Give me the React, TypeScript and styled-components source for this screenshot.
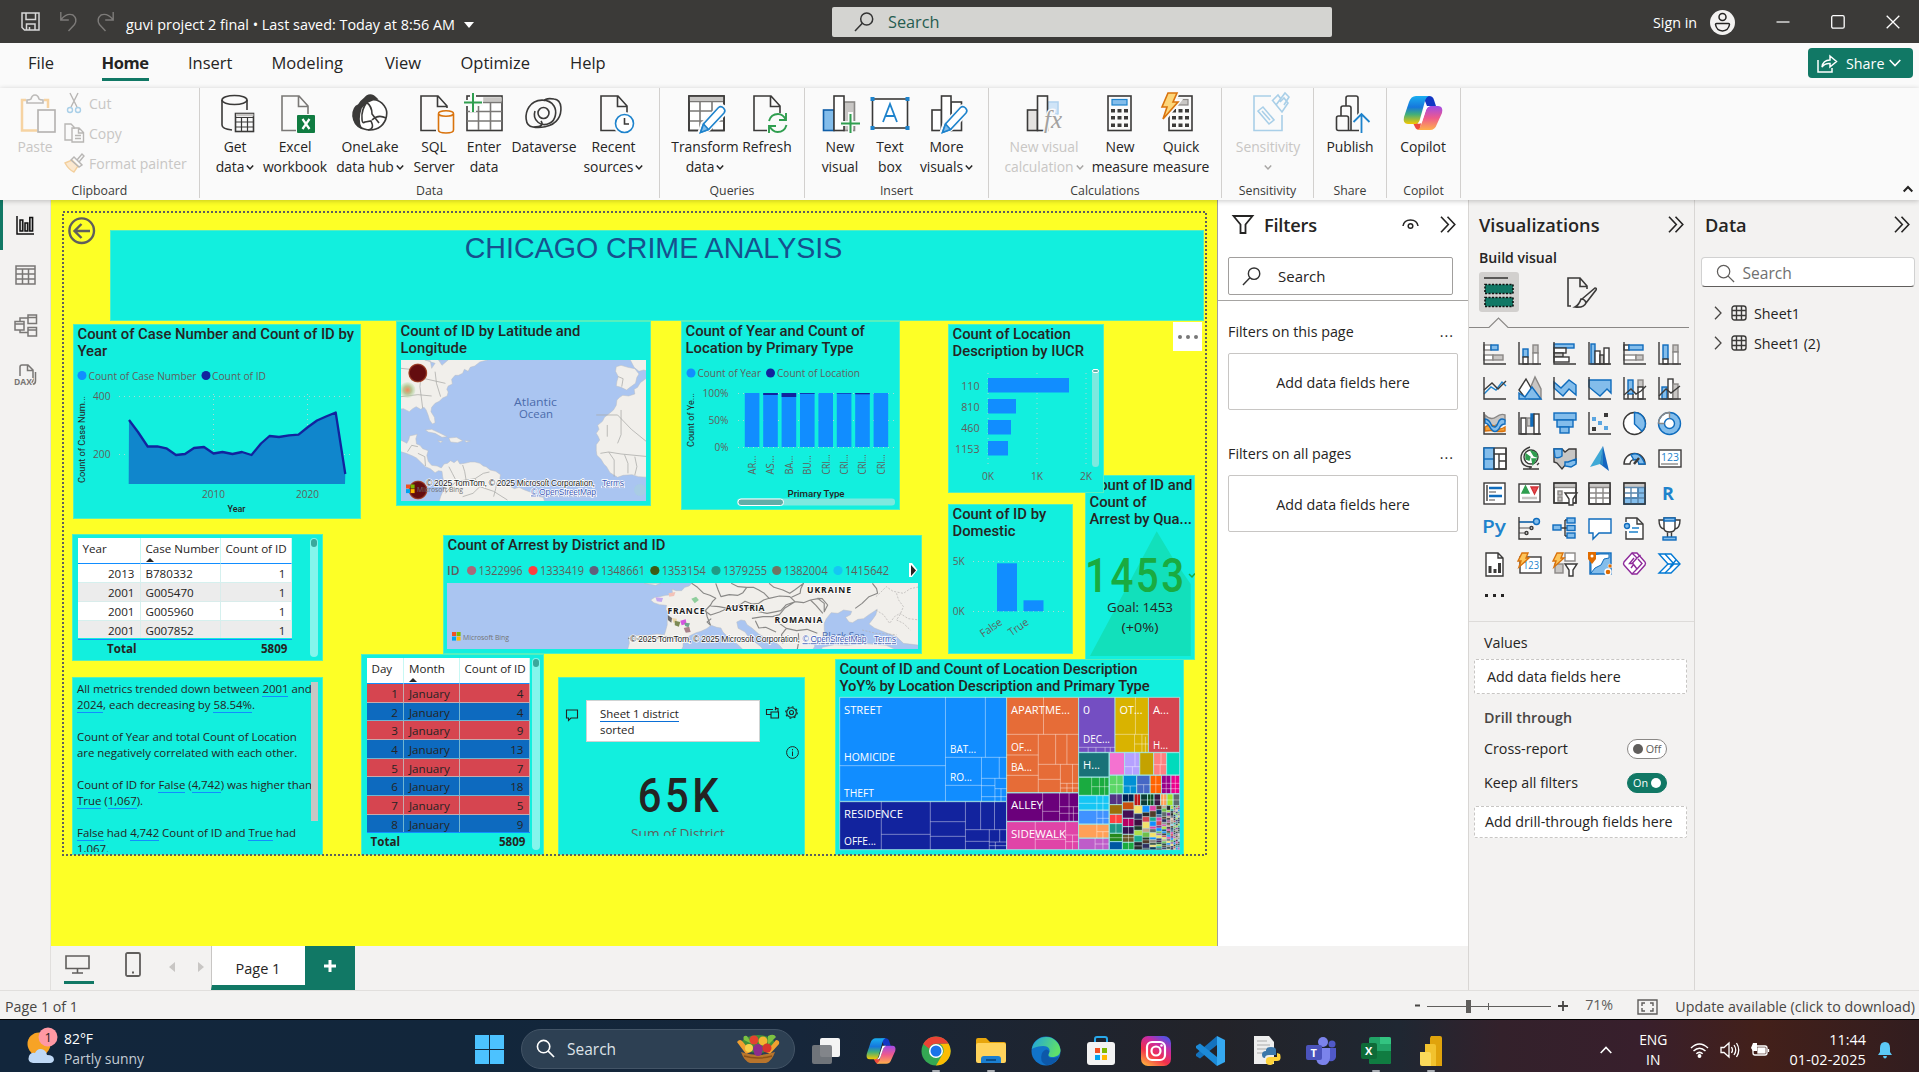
import React from 'react';
import styled, { createGlobalStyle } from 'styled-components';

const UI = "'Open Sans', 'Noto Sans', sans-serif";
const DIN = "Roboto, 'Open Sans', sans-serif";
const TEAL = '#12efde';
const GREEN = '#117865';
const INK = '#252423';
const PANE = '#f3f2f1';
const D = '#3b3a39';
const B = '#0f6cbd';
const F = '#83bdeb';
const G = '#c8c6c4';

const Global = createGlobalStyle`
  * { box-sizing: border-box; }
  body { margin: 0; font-family: ${UI}; color: ${INK}; overflow: hidden; }
  svg { display: block; flex: none; overflow: visible; }
`;

const Shell = styled.div`
  width: 1919px; height: 1072px; display: flex; flex-direction: column;
  background: ${PANE}; overflow: hidden; white-space: nowrap;
`;

/* ---------- title bar ---------- */
const TitleBar = styled.header`
  height: 43px; flex: none; background: #3b3a38; color: #fff; display: flex; align-items: center;
`;
const QuickAccess = styled.div`
  width: 832px; display: flex; align-items: center; padding-left: 21px; gap: 20px;
`;
const DocName = styled.div`
  font-size: 14.4px; letter-spacing: 0; display: flex; align-items: center; gap: 9px; margin: 6px 0 0 -8px;
`;
const TitleSearch = styled.div`
  width: 500px; height: 30px; background: #d4d4d1; border-radius: 2px; display: flex; align-items: center;
  padding-left: 22px; gap: 14px; font-size: 16.3px; color: #265c50;
`;
const WindowSide = styled.div`
  flex: 1; display: flex; align-items: center; padding-left: 321px; font-size: 14.3px; padding-top: 1px;
`;
const WindowButtons = styled.div`
  display: flex; gap: 41px; margin-left: 41px; align-items: center;
`;
const Avatar = styled.div`margin-left: 13px;`;

/* ---------- menu ---------- */
const MenuBar = styled.nav`
  height: 45px; flex: none; background: #fafafa; display: flex; align-items: flex-start; padding-left: 28px; position: relative;
`;
const MenuItem = styled.div<{ $w: number; $on?: boolean }>`
  width: ${p => p.$w}px; font-size: 16.5px; line-height: 24px; padding-top: 8px;
  font-weight: ${p => (p.$on ? 700 : 400)}; letter-spacing: ${p => (p.$on ? '-0.4px' : '0')};
  span { display: inline-block; padding-bottom: 3px; border-bottom: 3px solid ${p => (p.$on ? GREEN : 'transparent')}; }
`;
const ShareButton = styled.div`
  margin-left: auto; margin-right: 6px; margin-top: 5px; width: 105px; height: 30px; border-radius: 4px; background: ${GREEN}; color: #fff;
  display: flex; align-items: center; padding-left: 9px; gap: 9px; font-size: 14.3px;
`;
const Tight = styled.span`display: flex; align-items: center; gap: 5px;`;

/* ---------- ribbon ---------- */
const Ribbon = styled.div`
  height: 112px; flex: none; background: #fafafa; display: flex; position: relative; z-index: 2;
  box-shadow: 0 1px 5px rgba(0,0,0,.22);
`;
const Group = styled.section<{ $w: number }>`
  width: ${p => p.$w}px; height: 110px; border-right: 1px solid #d2d0ce; display: flex; flex-direction: column;
`;
const GroupBody = styled.div<{ $pad: number }>`
  display: flex; height: 92px; flex: none; padding: 5px 0 0 ${p => p.$pad}px;
`;
const GroupName = styled.div`
  font-size: 12.3px; line-height: 18px; text-align: center; margin-top: 2px; color: #3b3a39;
`;
const Tool = styled.div<{ $w: number; $dim?: boolean }>`
  width: ${p => p.$w}px; display: flex; flex-direction: column; align-items: center; font-size: 13.9px; line-height: 20px;
  color: ${p => (p.$dim ? '#c8c6c4' : INK)}; letter-spacing: -0.05px;
`;
const ToolLine = styled.div<{ $first?: boolean }>`
  margin-top: ${p => (p.$first ? 4 : 0)}px; display: flex; align-items: center; gap: 2px; min-height: 20px;
`;
const ClipRows = styled.div`display: flex; flex-direction: column; width: 130px; padding-left: 9px; margin-top: -5px;`;
const ClipRow = styled.div`
  height: 30px; flex: none; display: flex; align-items: center; gap: 5px; font-size: 14px; color: #c8c6c4;
`;
const Collapse = styled.div`margin: 97px 6px 0 auto;`;

/* ---------- main ---------- */
const Main = styled.div`height: 790px; flex: none; display: flex;`;
const Rail = styled.aside`
  width: 51px; border-right: 1px solid #e1dfdd; background: ${PANE}; display: flex; flex-direction: column;
`;
const RailItem = styled.div<{ $on?: boolean }>`
  height: 50px; display: flex; align-items: center; justify-content: center;
  border-left: 3px solid ${p => (p.$on ? GREEN : 'transparent')}; padding-right: 3px;
`;
const Center = styled.div`width: 1417px; display: flex; flex-direction: column;`;
const CenterRow = styled.div`height: 746px; display: flex;`;
const Canvas = styled.main`
  width: 1167px; height: 746px; background: #fdff26; position: relative; overflow: hidden; border-right: 1px solid #a19f9d;
`;
const PageFrame = styled.div`
  position: absolute; left: 11px; top: 11px; width: 1145px; height: 645px; overflow: hidden;
`;
const Visual = styled.section<{ $x: number; $y: number; $w: number; $h: number }>`
  position: absolute; left: ${p => p.$x - 51}px; top: ${p => p.$y - 200}px; width: ${p => p.$w}px; height: ${p => p.$h}px;
  background: ${TEAL}; box-shadow: inset 0 0 0 1px rgba(170,240,150,.45); overflow: hidden;
`;
const Over = styled.div<{ $x: number; $y: number }>`
  position: absolute; left: ${p => p.$x - 51}px; top: ${p => p.$y - 200}px;
`;
const VTitle = styled.h3<{ $ls?: number }>`
  margin: 0; padding: 2px 0 0 4.5px; font: 500 14.8px/17px ${DIN}; letter-spacing: ${p => p.$ls ?? 0.02}px; color: ${INK};
`;
const PageTitle = styled.h1`
  margin: 0; text-align: center; font: 400 28.6px/34px 'Liberation Sans', Arial, sans-serif; color: #17508d; padding: 1px 7px 0 0;
`;
const MoreBox = styled.div`
  width: 29px; height: 29px; background: #fff; display: flex; align-items: center; justify-content: center; gap: 4px;
  i { width: 4px; height: 4px; border-radius: 50%; background: #777; }
`;
const MapPad = styled.div`padding: 3px 0 0 5px;`;

/* tables */
const GridTable = styled.div<{ $cols: string }>`
  display: grid; grid-template-columns: ${p => p.$cols}; margin: 4px 0 0 5.5px; width: max-content; font-size: 11.6px;
`;
const Head = styled.div<{ $r?: boolean }>`
  background: #fff; height: 26px; border-bottom: 1px solid #118dff; border-right: 1px solid #c8f8f4; padding: 2px 5px 0; line-height: 17px;
  text-align: ${p => (p.$r ? 'right' : 'left')};
  svg { margin-top: 1px; }
`;
const Cell = styled.div<{ $bg: string; $r?: boolean; $short?: boolean; $line: string }>`
  background: ${p => p.$bg}; height: ${p => (p.$short ? 17.2 : 18.7)}px; line-height: 19.5px; padding: 0 5px; overflow: hidden;
  text-align: ${p => (p.$r ? 'right' : 'left')};
  border-bottom: ${p => (p.$short ? 0 : 1)}px solid ${p => p.$line}; border-right: 1px solid ${p => p.$line};
`;
const Foot = styled.div<{ $r?: boolean }>`
  border-top: 1px solid #118dff; font-weight: 700; height: 18px; line-height: 17px; padding: 0 4px; text-align: ${p => (p.$r ? 'right' : 'left')};
`;
const Row = styled.div`display: flex;`;
const ScrollTrack = styled.div<{ $h: number; $ml: number }>`
  width: 8px; height: ${p => p.$h}px; margin: 4px 0 0 ${p => p.$ml}px; border-radius: 4px; background: #84f5ec; padding: 1px;
  i { display: block; width: 6px; height: 8px; border-radius: 3px; background: #3aa79c; }
`;
const Story = styled.div`
  padding: 4px 0 0 5px; width: 239px; font-size: 11.45px; line-height: 16px; color: ${INK}; height: 175px; overflow: hidden; letter-spacing: -0.02px;
  p { margin: 0 0 16px; }
  u { text-decoration: none; box-shadow: 0 1px 0 #118dff; }
`;
const StoryBar = styled.div`width: 7px; height: 139px; margin-top: 5px; background: #c8c6c4;`;
const QnaRow = styled.div`display: flex; align-items: flex-start; padding: 23px 0 0 8px; gap: 8px;`;
const QnaComment = styled.div`padding-top: 9px;`;
const QnaBox = styled.div`
  width: 174px; height: 42px; background: #fff; border: 1px solid #cfd3d3; padding: 5px 0 0 13px; font-size: 11.4px; line-height: 16px;
  u { text-decoration: none; border-bottom: 1.5px solid #0b6fd6; }
`;
const BigNumber = styled.div`
  font: 500 48px/50px ${DIN}; letter-spacing: 4px; text-align: center; margin: 12px 0 0 -3px; color: ${INK}; transform: scaleX(.87);
`;
const SumLabel = styled.div`
  font-size: 13.7px; line-height: 20px; height: 12px; overflow: hidden; text-align: center; color: #605e5c; margin: 3px 0 0 -7px;
`;
const InfoRow = styled.div`display: flex; justify-content: flex-end; padding: 4px 6px 0 0;`;
const QnaIcons = styled.div`display: flex; gap: 6px; padding-top: 6px; margin-left: -2px;`;

/* page tabs */
const TabsRow = styled.div`height: 44px; display: flex; align-items: flex-start; padding-left: 13px; background: ${PANE};`;
const ViewIcon = styled.div<{ $on?: boolean; $w: number }>`
  width: ${p => p.$w}px; height: 38px; padding: 6px ${p => (p.$on ? 3 : 0)}px 0 0; display: flex; justify-content: center; margin-right: 24px;
  border-bottom: 3px solid ${p => (p.$on ? GREEN : 'transparent')};
`;
const PagerArrows = styled.div`padding-top: 16px; margin-left: -3px;`;
const PageTab = styled.div`
  width: 94px; height: 44px; background: #fff; border-left: 1px solid #c8c6c4; border-bottom: 5px solid ${GREEN};
  text-align: center; font-size: 14.5px; line-height: 45px; margin-left: 6.5px;
`;
const AddTab = styled.div`width: 50px; height: 44px; background: ${GREEN}; display: flex; justify-content: center; padding-top: 14px;`;

/* panes */
const FiltersPane = styled.aside`width: 250px; background: #fff; height: 746px; padding-top: 10px;`;
const Pane = styled.aside<{ $w: number }>`
  width: ${p => p.$w}px; border-left: 1px solid #d8d6d4; background: ${PANE}; padding-top: 10px; height: 790px;
`;
const PaneHead = styled.div<{ $l: number; $r: number }>`
  display: flex; align-items: center; height: 28px; padding: 0 ${p => p.$r}px 0 ${p => p.$l}px; font-size: 18.2px; font-weight: 600; letter-spacing: 0;
  > :nth-child(2) { margin-left: auto; }
`;
const HeadText = styled.span`padding-top: 2px;`;
const HeadLabel = styled.div`display: flex; align-items: center; gap: 10px; letter-spacing: -0.2px;`;
const HeadIcons = styled.div`display: flex; align-items: center; gap: 21px;`;
const FilterSearch = styled.div`
  margin: 19px 0 5px 10px; width: 225px; height: 38px; border: 1px solid #a19f9d; border-radius: 2px; display: flex; align-items: center;
  padding-left: 13px; gap: 17px; font-size: 15px;
`;
const Rule = styled.div`height: 1px; background: #a6a4a2;`;
const FilterLabel = styled.div<{ $top: number }>`
  margin-top: ${p => p.$top}px; padding: 0 14px 0 10px; display: flex; justify-content: space-between; font-size: 14.3px; line-height: 20px;
  span:last-child { transform: translateX(0); letter-spacing: 1px; }
`;
const DropBox = styled.div`
  margin: 11px 0 0 10px; width: 230px; height: 57px; border: 1px solid #c8c6c4; border-radius: 2px;
  display: flex; align-items: center; justify-content: center; font-size: 14.3px; background: #fff; padding-top: 2px;
`;
const BuildLabel = styled.div`font-size: 14.1px; font-weight: 600; padding-left: 10px; margin-top: 10px; line-height: 20px; letter-spacing: 0;`;
const BuildTabs = styled.div`display: flex; align-items: center; padding-left: 10px; margin-top: 4px; gap: 48px;`;
const BuildTab = styled.div`width: 40px; height: 40px; border-radius: 3px; background: #d2d0ce; display: flex; align-items: center; justify-content: center;`;
const IconGrid = styled.div`display: grid; grid-template-columns: repeat(6, 35px); grid-auto-rows: 35px; padding: 14px 0 0 14px;`;
const MoreDots = styled.div`display: flex; gap: 5.5px; padding: 7px 0 24px 16px; i { width: 2.5px; height: 2.5px; background: ${INK}; }`;
const PaneRule = styled.div`height: 1px; background: #dddbd9;`;
const WellLabel = styled.div<{ $top: number; $semi?: boolean }>`
  font-size: 14.3px; line-height: 20px; padding: 0 27px 0 15px; margin-top: ${p => p.$top}px; display: flex; align-items: center; justify-content: space-between;
  font-weight: ${p => (p.$semi ? 600 : 400)}; color: ${p => (p.$semi ? '#484644' : INK)};
`;
const Well = styled.div<{ $h: number; $top: number; $pl: number }>`
  margin: ${p => p.$top}px 0 0 5px; width: 213px; height: ${p => p.$h}px; background: #fff; border: 1px dashed #c8c6c4; border-radius: 2px;
  padding-left: ${p => p.$pl}px; display: flex; align-items: center; font-size: 14.3px;
`;
const Toggle = styled.span<{ $on?: boolean }>`
  width: 40px; height: 20px; border-radius: 10px; border: 1px solid ${p => (p.$on ? GREEN : '#8a8886')}; background: ${p => (p.$on ? GREEN : '#fff')};
  color: ${p => (p.$on ? '#fff' : '#605e5c')}; font-size: 10.8px; display: flex; align-items: center; justify-content: center; gap: 3px;
  flex-direction: ${p => (p.$on ? 'row-reverse' : 'row')};
  i { width: 10px; height: 10px; border-radius: 50%; background: ${p => (p.$on ? '#fff' : '#605e5c')}; }
`;
const DataSearch = styled.div`
  margin: 19px 0 11px 5.5px; width: 214px; height: 30px; border: 1px solid #d1d1d1; border-bottom-color: #605e5c; border-radius: 4px; background: #fff;
  display: flex; align-items: center; padding: 2px 0 0 14px; gap: 8px; font-size: 15.6px; color: #707070;
`;
const TreeRow = styled.div`height: 30px; display: flex; align-items: center; padding-left: 19px; gap: 9px; font-size: 14.3px; span { margin-left: -2px; }`;

/* status + taskbar */
const StatusBar = styled.footer`
  height: 29px; flex: none; border-top: 1px solid #e1dfdd; background: ${PANE}; display: flex; align-items: center; padding: 3px 4px 0 5px; font-size: 14.25px; color: #484644;
`;
const StatusRight = styled.div`margin-left: auto; display: flex; align-items: center;`;
const Pct = styled.span`width: 52px; margin-left: 16px; color: #605e5c; margin-top: -4px; letter-spacing: -0.2px;`;
const Update = styled.span`margin-left: 17px; letter-spacing: 0.04px;`;
const TaskBar = styled.div`
  height: 53px; flex: none; border-top: 1px solid #000; color: #fff; display: flex; align-items: center; position: relative;
  background: linear-gradient(90deg, #12263c 0, #12263b 480px, #16263a 800px, #232329 1220px, #1f2732 1400px, #33212b 1500px, #381f2c 1640px, #43201a 1760px, #321d1f 1919px);
`;
const Weather = styled.div`display: flex; align-items: center; width: 475px; padding-left: 27px; gap: 7px; font-size: 13.9px; line-height: 20px; span { color: #c4ccd4; }`;
const WeatherText = styled.div`padding-top: 6px;`;
const StartButton = styled.div`padding-top: 6px;`;
const TaskSearch = styled.div`
  width: 274px; height: 40px; border-radius: 20px; background: #2d4053; border: 1px solid #435466; margin: 5px 0 0 17px;
  display: flex; align-items: center; padding: 0 12px 0 14px; gap: 12px; font-size: 15.5px; color: #dde3e8;
  svg:last-child { margin-left: auto; }
`;
const TaskApps = styled.div`display: flex; gap: 25px; margin-left: 15.5px;`;
const TaskApp = styled.div<{ $run?: boolean }>`
  height: 52px; width: 30px; display: flex; flex-direction: column; justify-content: space-between; align-items: center; padding-top: 16px;
  &::after { content: ''; width: 8px; height: 2px; border-radius: 1px; background: ${p => (p.$run ? '#a9adb3' : 'transparent')}; }
`;
const Tray = styled.div`margin-left: auto; padding-right: 26px; display: flex; align-items: center; font-size: 13.9px; line-height: 20px; text-align: center; padding-top: 7px;`;
const TrayIcons = styled.div`display: flex; gap: 11px; margin: 0 19px 0 23px; align-items: center;`;
const Clock = styled.div`text-align: right; margin-right: 11px; font-size: 14.4px; span { letter-spacing: 0.15px; }`;
const Lang = styled.div`margin-left: 27px;`;

/* ---------- icon helpers ---------- */
type P = { children: React.ReactNode; w?: number; h?: number; vb?: string; s?: string; sw?: number; f?: string };
const Svg = ({ children, w = 40, h = 40, vb, s = D, sw = 1.6, f = 'none' }: P) => (
  <svg width={w} height={h} viewBox={vb ?? `0 0 ${w} ${h}`} fill={f} stroke={s} strokeWidth={sw}>{children}</svg>
);
const R = ({ x, y, w, h, f = 'none', s = D }: { x: number; y: number; w: number; h: number; f?: string; s?: string }) => (
  <rect x={x} y={y} width={w} height={h} fill={f} stroke={s} />
);
const Doc = () => <path d="M7 3h17l9 10v24.500H7zM23.500 3v10.500H33" fill="#fafafa" />;
const Lens = ({ w = 20, c = '#333' }: { w?: number; c?: string }) => (
  <Svg w={w} h={w} vb="0 0 20 20" s={c} sw={1.500}><circle cx="12.700" cy="7" r="6" /><path d="M8.300 11.300 1 19" /></Svg>
);
const LensR = ({ w = 19, c = '#605e5c', sw = 1.3 }: { w?: number; c?: string; sw?: number }) => (
  <Svg w={w} h={w} vb="0 0 20 20" s={c} sw={sw}><circle cx="8" cy="8" r="6.500" /><path d="M12.800 12.800 19 19" /></Svg>
);
const Chevrons = () => <Svg w={16} h={17} s="#252423" sw={1.6}><path d="M1 .7 8.300 8.500 1 16.300M7.500 .7l7.300 7.800-7.300 7.800" /></Svg>;
const Drop = ({ dim }: { dim?: boolean }) => <Svg w={8} h={6} s={dim ? '#a8a6a4' : INK} sw={1.500}><path d="M.8 1.500 4 4.900 7.200 1.500" /></Svg>;
const Pencil = () => (
  <g><path d="M14 41 17.500 31 33.500 14.500q3-3 6 0t0 6L23.500 36.500z" fill="#fafafa" stroke="#fafafa" strokeWidth="4" />
    <path d="M15.500 39.500 18.500 31 33.500 14.500q2.500-2 5 .5t.5 5L23.500 36.500z" fill="#fff" stroke="#1e83cc" /><path d="M15.500 39.500 18.500 31l5 5.500z" fill={F} stroke="#1e83cc" /></g>
);
const Calc = ({ grey }: { grey?: boolean }) => (
  <g><rect x="8" y="3" width="23" height="34.500" fill="#fafafa" /><rect x="12" y="6.500" width="15" height="5.500" fill={grey ? G : F} stroke={grey ? '#8a8886' : '#1e83cc'} strokeWidth="1.200" />
    {[16, 23, 30.5].map(y => [11, 17.5, 24].map(x => <rect key={`${x}-${y}`} x={x} y={y} width="4" height="3.500" fill={D} stroke="none" />))}</g>
);
const CopilotMark = ({ w }: { w: number }) => (
  <svg width={w} height={w} viewBox="0 0 40 40">
    <defs>
      <linearGradient id="cpA" x1="0" y1="0" x2="0" y2="1"><stop offset="0" stopColor="#1aaef0" /><stop offset=".4" stopColor="#1577dc" /><stop offset=".65" stopColor="#3fae7c" /><stop offset="1" stopColor="#f5c800" /></linearGradient>
      <linearGradient id="cpB" x1="0" y1="0" x2="0" y2="1"><stop offset="0" stopColor="#a04be8" /><stop offset=".5" stopColor="#ee5a8c" /><stop offset="1" stopColor="#ffb04a" /></linearGradient>
    </defs>
    <path d="M20 3h6q4 0 5 4l2 6h-9z" fill="#1137c4" />
    <path d="M10 30h8l-1 7q-4 0-5-3z" fill="#ee4b3c" />
    <path d="M13 3h13q-3 1-4 5l-5 18q-1 5-5 5H5Q-.5 31 1 24L6 9q2-6 7-6z" fill="url(#cpA)" />
    <path d="M27 37H14q3-1 4-5l5-15q1-4 5-4h7q5.500 0 4 7l-5 11q-2 6-7 6z" fill="url(#cpB)" />
    <path d="M22 13h5q-3 1-4 4l-4 12q-1 2-4 2h-1q3-1 4-6z" fill="#fff" />
  </svg>
);

const tools: Record<string, React.ReactNode> = {
  get: <Svg><ellipse cx="19.500" cy="7" rx="12.500" ry="4.500" /><path d="M7 7v25q0 4 10 5M32 7v10" /><R x={20.5} y={20.5} w={18} h={18} f="#fafafa" /><path d="M21 22h17.500" stroke={G} strokeWidth="2.500" /><path d="M20.500 24.500h18M20.500 29h18M20.500 34h18M26.500 24.500v14M32.500 24.500v14" strokeWidth="1.200" /></Svg>,
  excel: <Svg s="#7a7876"><Doc /><rect x="21" y="21" width="19" height="19" fill="#fafafa" stroke="none" /><rect x="22" y="22" width="18" height="18" rx="1" fill="#107c41" stroke="none" /><path d="m27.500 26 7 10m0-10-7 10" stroke="#fff" strokeWidth="2.200" /></Svg>,
  lake: <Svg><path d="M24 6.500C33 8 38 16 36.500 23 35 32 28 37 20 37 12 37 5 32 3.500 23" fill="#fff" /><path d="M27 6Q20-2 14 6 10 9 8.500 12 3 14 3 23q1 9 8 12Q7 27 11 15q6-8 16-9z" fill={D} /><path d="M17 9Q11 17 12 26q0 5 3 3l6-1q4 8-3 9M16 9q6 4 6 12l7 9M22 27q6-6 14-2" /></Svg>,
  sql: <Svg><Doc /><rect x="22" y="15" width="20" height="26" fill="#fafafa" stroke="none" /><g stroke="#d9730d"><path d="M24.500 21v16q0 3 7.500 3t7.500-3V21" fill="#fafafa" /><ellipse cx="32" cy="20.500" rx="7.500" ry="2.800" fill="#fafafa" /></g></Svg>,
  enter: <Svg><R x={3} y={3} w={35} h={34.5} f="#fff" /><path d="M20 5h17v3H20z" fill={G} stroke={G} /><path d="M3 9.500h35M3 18.500h35M3 28h35M14.500 9v28M26.500 9v28" stroke="#7a7876" /><path d="M9 -1v20M-1 10h20" stroke="#fafafa" strokeWidth="6" /><path d="M9 0v19M0 9.500h18" stroke="#2f9e4f" strokeWidth="2" /></Svg>,
  verse: <Svg><circle cx="19.500" cy="20" r="5.500" /><path d="M9 34C0 33 1 20 5 14c6-9 20-9 25-1 3 5 2 14-4 17-9 5-18-3-15-12" /><path d="M30 6c9 1 8 14 4 20-6 9-20 9-25 8 10 0 10-3 8-6M30 6c-6-1-9 0-10 2" /></Svg>,
  recent: <Svg><Doc /><circle cx="30.500" cy="30.500" r="9.500" fill="#fff" stroke="#fafafa" strokeWidth="4" /><circle cx="30.500" cy="30.500" r="9" fill="#fff" stroke="#1e83cc" /><path d="M30.500 25v6H35" /></Svg>,
  transform: <Svg><R x={4} y={3} w={35} h={34.5} f="#fff" /><path d="M4 5.500h35" stroke={G} strokeWidth="4" /><path d="M4 8.500h35M4 18h35M4 28h35M15 9v28M27 9v28" stroke="#7a7876" /><path d="M4 3h35v34.500H4z" /><Pencil /></Svg>,
  refresh: <Svg><Doc /><rect x="20" y="20" width="22" height="21" fill="#fafafa" stroke="none" /><g stroke="#2f9e4f" strokeWidth="1.900"><path d="M22 28q2-7 9-7 5 0 8 6M39 20v7h-7M39.500 32q-2 7-9 7-5 0-8-6M22 40v-7h7" /></g></Svg>,
  newvis: <Svg><R x={24} y={9} w={10.5} h={28.5} f={G} s="#8a8886" /><R x={3.5} y={17} w={10.5} h={20.5} f={F} s="#0f5ea8" /><R x={14} y={3} w={10} h={34.5} f="#fff" /><path d="M30.500 19v22M20 30.500h21" stroke="#fafafa" strokeWidth="5" /><path d="M30.500 21v19M21 30.500h19" stroke="#2f9e4f" strokeWidth="2" /></Svg>,
  textbox: <Svg><R x={2.5} y={6} w={35} h={29} f="#fff" />{[0.5, 35.5].map(x => [4, 33].map(y => <rect key={`${x}-${y}`} x={x} y={y} width="4" height="4" fill="#1e83cc" stroke="none" />))}<path d="m13 29 7-18 7 18M15.500 23h9" stroke="#1e83cc" strokeWidth="1.800" /></Svg>,
  morevis: <Svg><R x={24} y={9} w={10.5} h={28.5} f="#fff" /><R x={5} y={17} w={9.5} h={20.5} f="#fff" /><R x={14.5} y={3} w={9.5} h={34.5} f="#fff" /><Pencil /></Svg>,
  viscalc: <Svg s="#bdbbb9"><R x={3.5} y={17} w={10} h={20.5} f="#e5e3e1" /><R x={24} y={9} w={10} h={12} f="#cfe4f7" s="#b3d4ef" /><R x={13.5} y={3} w={10} h={34.5} f="#fafafa" /><text x="20" y="35" fontSize="25" fontStyle="italic" fontFamily="'Liberation Serif', serif" fill="#a3a19f" stroke="#fafafa" strokeWidth="3" paintOrder="stroke">fx</text></Svg>,
  measure: <Svg><Calc /></Svg>,
  quick: <Svg><Calc grey /><path d="M7-1h10l-4 9h5L2 28l4-13H0z" fill="#fafafa" stroke="#fafafa" strokeWidth="4" /><path d="M7 0h9l-4 9h5L2 26l4-12H1z" fill="#fdd67a" stroke="#d9730d" /></Svg>,
  sens: <Svg s="#a9cfe8"><path d="M23 3H6v34.500h28V22" /><path d="m10 18 5-4 11 13-5 4zM14 18l8 9M24 8l6-6 3 4M25 8l9 11 6-9-4-5-4 4M28 12l9-12 4 4-5 8" /></Svg>,
  publish: <Svg><path d="M16 13V5q0-2 2-2h8q2 0 2 2v17M11 23v-8q0-2 2-2h6q2 0 2 2v22.500" /><path d="M6.500 25q0-2 2-2h8q2 0 2 2v12.500H8.500q-2 0-2-2zM18 37.500h12" /><path d="M31.500 40V21.500M23.500 29l8-8 8 8" stroke="#fafafa" strokeWidth="5" /><path d="M31.500 40V21.500M23.500 29l8-8 8 8" stroke="#1e83cc" strokeWidth="1.800" /></Svg>,
  copilot: <CopilotMark w={40} />,
};

type ToolDef = [string, number, string, string, boolean?, boolean?];
const groups: { name: string; w: number; pad: number; tools: ToolDef[] }[] = [
  { name: 'Data', w: 460, pad: 11, tools: [['get', 48, 'Get', 'data', true], ['excel', 72, 'Excel', 'workbook'], ['lake', 78, 'OneLake', 'data hub', true], ['sql', 50, 'SQL', 'Server'], ['enter', 50, 'Enter', 'data'], ['verse', 70, 'Dataverse', ''], ['recent', 69, 'Recent', 'sources', true]] },
  { name: 'Queries', w: 145, pad: 11, tools: [['transform', 68, 'Transform', 'data', true], ['refresh', 56, 'Refresh', '']] },
  { name: 'Insert', w: 184, pad: 12, tools: [['newvis', 46, 'New', 'visual'], ['textbox', 54, 'Text', 'box'], ['morevis', 59, 'More', 'visuals', true]] },
  { name: 'Calculations', w: 233, pad: 11, tools: [['viscalc', 88, 'New visual', 'calculation', true, true], ['measure', 64, 'New', 'measure'], ['quick', 58, 'Quick', 'measure']] },
  { name: 'Sensitivity', w: 92, pad: 6, tools: [['sens', 80, 'Sensitivity', '', true, true]] },
  { name: 'Share', w: 73, pad: 6, tools: [['publish', 60, 'Publish', '']] },
  { name: 'Copilot', w: 74, pad: 5, tools: [['copilot', 62, 'Copilot', '']] },
];

/* ---------- visualization gallery ---------- */
const Ax = () => <path d="M1 0v22h22" stroke={D} />;
const W = '#fff';
const GS = '#8a8886';
const gallery: React.ReactNode[] = [
  <><R x={1} y={3} w={7} h={5} f={W} s={GS} /><R x={8} y={3} w={7} h={5} f={F} s={B} /><R x={1} y={13} w={9} h={5} f={W} s={GS} /><R x={10} y={13} w={10} h={5} f={G} s={GS} /><Ax /></>,
  <><R x={5} y={7} w={5} h={8} f={F} s={B} /><R x={5} y={15} w={5} h={7} f={W} /><R x={15} y={3} w={5} h={8} f={G} s={GS} /><R x={15} y={11} w={5} h={11} f={W} s={GS} /><Ax /></>,
  <><R x={1} y={2} w={20} h={4} f={F} s={B} /><R x={1} y={6} w={12} h={5} f={W} /><R x={1} y={11} w={9} h={4} f={G} /><R x={1} y={15} w={15} h={5} f={W} /><Ax /></>,
  <><R x={3} y={2} w={4} h={20} f={F} s={B} /><R x={7} y={9} w={5} h={13} f={W} /><R x={12} y={13} w={4} h={9} f={G} /><R x={16} y={6} w={5} h={16} f={W} /><Ax /></>,
  <><R x={1} y={3} w={5} h={5} f={W} /><R x={6} y={3} w={14} h={5} f={F} s={B} /><R x={1} y={13} w={12} h={5} f={W} s={GS} /><R x={13} y={13} w={7} h={5} f={G} s={GS} /><Ax /></>,
  <><R x={5} y={3} w={5} h={14} f={F} s={B} /><R x={5} y={17} w={5} h={5} f={W} /><R x={15} y={3} w={5} h={7} f={G} s={GS} /><R x={15} y={10} w={5} h={12} f={W} s={GS} /><Ax /></>,
  <><path d="m1 17 7-7 5 3 6-8 4 4" stroke="#1e83cc" /><path d="m1 13 8-7 6 6 8-8" stroke={D} /><Ax /></>,
  <><path d="m11 14 6-14 6 12v10H11z" fill={G} stroke={GS} /><path d="m1 13 7-11 9 16-9 4z" fill={W} stroke={D} /><path d="m1 16 6 4 7-10 9 12H1z" fill={F} stroke={B} /></>,
  <><path d="m1 5 7 6 8-8 7 5v10l-7-6-6 7-9-8z" fill={F} stroke={B} /><Ax /></>,
  <><path d="M1 3h22v13l-4-4-7 7-5-4-6-5z" fill={F} stroke={B} /><Ax /></>,
  <><R x={5} y={3} w={5} h={14} f={F} s={B} /><R x={15} y={3} w={5} h={7} f={G} s={GS} /><R x={15} y={10} w={5} h={12} f={W} /><path d="m1 18 7-6 5 5 5-3 5-5M5 17v5m5-5v5" /><Ax /></>,
  <><R x={4} y={10} w={5} h={12} f={F} s={B} /><R x={10} y={2} w={5} h={20} f={W} /><R x={15} y={7} w={5} h={15} f={G} s={GS} /><path d="m1 19 7-7 5 4 9-7" /><Ax /></>,
  <><path d="M2 3q6 6 11 2t9-2v6q-5 1-9 4T2 9z" fill={G} stroke={GS} /><path d="M2 15q6-4 10 0t10 0v4q-6 1-10 0T2 19z" fill="#f2a33c" stroke="#d9730d" /><path d="M2 7q4 0 7 7 4 3 6-3t7-3v4q-4 0-6 5-4 5-8 0-3-6-6-6z" fill={F} stroke={B} /><Ax /></>,
  <><R x={3} y={6} w={5} h={16} f={W} /><R x={9} y={6} w={4} h={8} f={G} s={GS} /><R x={13} y={2} w={3} h={12} f={B} s={B} /><R x={16} y={2} w={5} h={20} f={W} /><Ax /></>,
  <><R x={1} y={1} w={22} h={7} f={F} s={B} /><R x={4} y={8} w={16} h={7} f={F} s={B} /><R x={7} y={15} w={9} h={6} f={F} s={B} /></>,
  <g stroke="none"><rect x="16" y="1" width="4" height="4" fill={D} /><rect x="4" y="15" width="4" height="4" fill={D} /><rect x="4" y="5" width="4" height="4" fill="#5aa5e0" /><rect x="10" y="9" width="4" height="4" fill="#5aa5e0" /><rect x="16" y="14" width="4" height="4" fill="#5aa5e0" /><path d="M1 0v22h22" stroke={D} /></g>,
  <><circle cx="11.500" cy="11.500" r="11" fill={W} stroke={D} /><path d="M11.500.5a11 11 0 0 1 7.500 18.800L11.500 12z" fill={F} stroke={B} /></>,
  <><circle cx="11.500" cy="11.500" r="8" stroke={F} strokeWidth="6" /><path d="M3.500 11.500a8 8 0 0 1 8-8" stroke={W} strokeWidth="6" /><circle cx="11.500" cy="11.500" r="11" stroke={B} /><circle cx="11.500" cy="11.500" r="5" stroke={B} fill={W} /><path d="M.5 11.500a11 11 0 0 1 11-11v6M.5 11.500h6" stroke={GS} /></>,
  <><R x={1} y={1} w={22} h={21} f={W} /><R x={1} y={1} w={10} h={21} f={F} s={B} /><path d="M1 12h10" stroke={B} /><path d="M11 7h12M11 1v21h12V1M16 7v15M16 14h7" /></>,
  <><circle cx="13" cy="10" r="7" fill={W} /><path d="m8 7 4 3-1 3-3-1zM13 4l5 2 1 4-3-1zM14 12l4 0-3 5z" fill="#2f9e4f" stroke="#2f9e4f" /><path d="M12 0Q3 3 3 11t9 9h2M12 19v3M5 22h16M19 18l2-2" /></>,
  <><path d="M1 2h8l3 3 4-3h7v14l-4 3-6-2-4 5-5-6-3-1z" fill={G} stroke={D} /><path d="M1 2h8v7q-4 3-7 1zM12 15h3l8-3v5l-5 3-6-1z" fill={F} stroke={B} /></>,
  <><path d="M15-1 2 20l10-3z" fill="#3fa9d6" stroke="none" /><path d="m15-1 6 25-9-7z" fill="#1565c0" stroke="none" /><path d="m15-1-3 18 3 1z" fill="#2b8bc6" stroke="none" /></>,
  <><path d="M1 17a10.500 10.500 0 0 1 21 0h-6a4.500 4.500 0 0 0-9 0z" fill={W} stroke={D} /><path d="M8 8q8-5 14 9h-6q-2-6-5-4z" fill={F} stroke={B} /><path d="m11 17 5-6" strokeWidth="2.500" /></>,
  <><R x={1} y={3} w={22} h={17} f={W} /><text x="3" y="14" fontSize="11" fontFamily={UI} fill="#1e83cc" stroke="none" textLength="18" lengthAdjust="spacingAndGlyphs">123</text><path d="M3 17h17" stroke={GS} /></>,
  <><R x={1} y={1} w={21} h={21} f={W} /><path d="M4 3v16" /><path d="M6 6h13M6 14h13" stroke={B} strokeWidth="2.500" /><path d="M6 10h7M6 18h6" stroke={GS} /></>,
  <><R x={1} y={2} w={21} h={18} f={W} /><path d="m4 11 3.500-7 3.500 7z" fill="#2f9e4f" stroke="#2f9e4f" /><path d="m13 5 3.500 7L20 5z" fill="#e8464f" stroke="#d13438" /><path d="M4 16h15" stroke={G} strokeWidth="2.500" /></>,
  <><R x={1} y={1} w={22} h={20} f={W} /><path d="M1 3.500h22" stroke={G} strokeWidth="3" /><path d="M1 5.500h22" stroke={GS} /><path d="M1 1h22v20H1z" /><R x={5} y={9} w={4} h={4} f={G} s={GS} /><R x={5} y={15} w={4} h={4} f={G} s={GS} /><path d="M12 11h12l-4 6v6h-4v-6z" fill={W} /></>,
  <><R x={1} y={1} w={21} h={21} f={W} /><path d="M1 3.500h21" stroke={G} strokeWidth="3" /><path d="M1 5.500h21M1 11h21M1 16h21M8 5v17M15 5v17" stroke={GS} /><path d="M1 1h21v21H1z" /></>,
  <><R x={1} y={1} w={21} h={21} f={W} /><path d="M15 5h7v17H1v-6h14z" fill={F} stroke={B} /><path d="M1 3.500h21" stroke={G} strokeWidth="3" /><path d="M1 5.500h21M1 11h21M1 16h21M8 5v17M15 5v17" stroke="#5b87ad" /><path d="M1 1h21v21H1z" /></>,
  <text x="4" y="18" fontSize="18" fontWeight="700" fontFamily={UI} fill="#1e83cc" stroke="none">R</text>,
  <text x="-1" y="16" fontSize="18.500" fontWeight="600" fontFamily={UI} fill="#1e83cc" stroke="none" textLength="24" lengthAdjust="spacingAndGlyphs">Py</text>,
  <><path d="M1 5h15M1 11h11M1 16h6" stroke={GS} /><path d="M1 5h15" stroke={B} /><circle cx="18.500" cy="4.500" r="3" fill={F} stroke={B} /><circle cx="13.500" cy="11" r="1.500" /><circle cx="8.500" cy="16" r="1.500" /><Ax /></>,
  <><path d="M8 11h6M12 3v16M12 3h3M12 19h3" /><R x={0} y={8} w={8} h={5} f={F} s={B} /><R x={14} y={1} w={8} h={5} f={F} s={B} /><R x={14} y={8.5} w={8} h={5} f={F} s={B} /><R x={14} y={16} w={8} h={5} f={F} s={B} /></>,
  <path d="M1 2h22v14H11l-6 6v-6H1z" fill={W} stroke={B} />,
  <><path d="M3 5V1h11l6 6v15H3v-8" fill={W} /><path d="M14 1v6h6" /><circle cx="4" cy="9" r="2.500" fill={F} stroke={B} /><path d="M9 11h7M6 15h9" stroke="#1e83cc" /></>,
  <><path d="M6 1h11v10q0 4-5.500 4T6 11zM6 3H1q0 8 5 9M17 3h5q0 8-5 9M9.500 15v5M13.500 15v5" fill={W} /><R x={6} y={1} w={11} h={3} f={F} s={B} /><R x={5} y={20} w={13} h={3} f={F} s={B} /></>,
  <><path d="M3 1h12l5 5v18H3zM15 1v5h5" fill={W} /><path d="M7 21v-7M12 21v-4M16.500 21V11" stroke={D} strokeWidth="3" /></>,
  <><R x={2} y={5} w={21} h={16} f={W} s={D} /><text x="5" y="17" fontSize="11" fontFamily={UI} fill="#1e83cc" stroke="none" textLength="16" lengthAdjust="spacingAndGlyphs">123</text><path d="M4 1h6L8 6h3L1 15l2-6H0z" fill="#fdc55a" stroke="#d9730d" /></>,
  <><R x={12} y={1} w={10} h={8} f={W} s={GS} /><R x={2} y={12} w={8} h={9} f={G} s={GS} /><path d="M12 12h12l-4 6v6h-4v-6z" fill={W} /><path d="M4 1h6L8 6h3L1 15l2-6H0z" fill="#fdc55a" stroke="#d9730d" /></>,
  <><R x={2} y={1} w={21} h={21} f={F} s={B} /><path d="M21 2v4l-5 1-3 6-6 3-4 5V3l9-1z" fill={W} stroke={B} strokeWidth="1" /><path d="M0 0h8v7l-4 5-4-5z" fill="#e06c00" stroke="none" /><circle cx="4" cy="4" r="1.500" fill="#fff" stroke="none" /><circle cx="20" cy="20" r="3" fill="#e06c00" stroke="#fff" /><circle cx="22" cy="14" r="2" fill="#e06c00" stroke="#fff" strokeWidth=".6" /></>,
  <g stroke="#8e2a9b"><path d="M9 1 1 10q-1 2 0 3l8 9h5l8-9q1-2 0-3l-8-9z" fill={W} /><path d="m9 1 5 5-4.500 5L14 17l-5 5M14 6l3.500-3M9.500 11.500h-3L11 6M14 17l5-5.500L15 7M8 16l3-4" /></g>,
  <g stroke="#0078d4"><path d="M1 2h12l9 10-9 9H1l9-9z" fill={W} /><path d="m7 2 9 10-9 9M12 15l6-7M10 12h12" /></g>,
];

/* ---------- charts ---------- */
const linePts = '129,420 138,432 147.700,446.500 157.300,446.300 166.300,448.300 176,455 185,454 194,448 204,447 213.500,453.500 222.500,452 232.500,454 242,452 251.500,455 261,443.500 269.500,436 279,437 289,435.300 298.500,434.700 308,427 317,420.500 326,416.500 335.700,412.500 345.300,474';
const T = ({ x, y, t, w, a, s = 11, f = '#605e5c', font, b }: { x: number; y: number; t: string; w?: number; a?: 'middle' | 'end'; s?: number; f?: string; font?: string; b?: number }) => (
  <text x={x} y={y} fontSize={s} fill={f} textAnchor={a ?? 'start'} textLength={w} lengthAdjust="spacingAndGlyphs" fontFamily={font ?? UI} fontWeight={b ?? 400}>{t}</text>
);
const Chart = ({ x, y, w, h, children }: { x: number; y: number; w: number; h: number; children: React.ReactNode }) => (
  <svg width={w} height={h} viewBox={`${x} ${y} ${w} ${h}`}>{children}</svg>
);
const Dots = ({ d }: { d: string }) => <path d={d} stroke="#a9dcd4" strokeDasharray="1 4" fill="none" />;

const LineChart = () => (
  <Chart x={73} y={360} w={288} h={158}>
    <circle cx="82" cy="375.500" r="4.500" fill="#118dff" /><T x={88.5} y={380} t="Count of Case Number" w={108} />
    <circle cx="206" cy="375.500" r="4.500" fill="#12239e" /><T x={212} y={380} t="Count of ID" w={54} />
    <Dots d="M119 396.500H354M119 454.500H354M213.500 394V484M307.500 394V484" />
    <T x={110.5} y={400} t="400" a="end" w={17.5} /><T x={110.5} y={458} t="200" a="end" w={17.5} />
    <polygon points={`128.700,484 ${linePts} 345,484`} fill="#1086cc" />
    <polyline points={linePts} fill="none" stroke="#12239e" strokeWidth="2.300" strokeLinejoin="round" />
    <T x={213.5} y={498} t="2010" a="middle" w={23} /><T x={307.5} y={498} t="2020" a="middle" w={23} />
    <T x={236.5} y={512} t="Year" a="middle" w={18} s={9.5} f={INK} font={DIN} b={500} />
    <g transform="translate(85 483) rotate(-90)"><T x={0} y={0} t="Count of Case Num..." w={87} s={9.5} f={INK} font={DIN} b={400} /></g>
  </Chart>
);

const pcts: [string, number][] = [['AR...', 0], ['AS...', 2], ['BA...', 4], ['BU...', 0.8], ['CRI...', 0], ['CRI...', 0.6], ['CRI...', 1.3], ['CRI...', 0]];
const PercentChart = () => (
  <Chart x={681} y={357} w={219} h={153}>
    <circle cx="691" cy="373" r="4.500" fill="#118dff" /><T x={697.5} y={377} t="Count of Year" w={63.5} />
    <circle cx="770.500" cy="373" r="4.500" fill="#12239e" /><T x={777} y={377} t="Count of Location" w={83} />
    <Dots d="M738 393.500H895M738 420.500H895M738 447.500H895" />
    <T x={728.5} y={397} t="100%" a="end" w={26} s={10.5} /><T x={728.5} y={424} t="50%" a="end" w={20} s={10.5} /><T x={728.5} y={451} t="0%" a="end" w={14} s={10.5} />
    {pcts.map(([n, v], i) => (
      <g key={i}>
        <rect x={744.8 + i * 18.4} y={393} width="14.600" height="54" fill="#118dff" />
        <rect x={744.8 + i * 18.4} y={393} width="14.600" height={v} fill="#12239e" />
        <g transform={`translate(${756 + i * 18.4} 474.500) rotate(-90)`}><T x={0} y={0} t={n} s={10.5} w={n.length > 5 ? 20 : 19} /></g>
      </g>
    ))}
    <T x={816} y={496.5} t="Primary Type" a="middle" w={57} s={9.5} f={INK} font={DIN} b={500} />
    <g transform="translate(694 447) rotate(-90)"><T x={0} y={0} t="Count of Ye..." w={54} s={9.5} f={INK} font={DIN} b={400} /></g>
    <rect x="737" y="498.500" width="158" height="7" rx="3" fill="#7ce9df" /><rect x="738" y="499" width="45.500" height="6.500" rx="3" fill="#62aea8" stroke="#fff" />
  </Chart>
);

const iucr: [string, number][] = [['110', 81], ['810', 28], ['460', 23], ['1153', 20]];
const IucrChart = () => (
  <Chart x={948} y={360} w={156} h={133}>
    <Dots d="M988 373V468M1037 373V468M1086 373V468" />
    {iucr.map(([n, v], i) => (
      <g key={n}><rect x="988" y={378 + i * 21} width={v} height="14.500" fill="#118dff" /><T x={979.5} y={389.5 + i * 21} t={n} a="end" s={10.7} /></g>
    ))}
    {['0K', '1K', '2K'].map((n, i) => <T key={n} x={988 + i * 49} y={480} t={n} a="middle" s={10.7} w={12} />)}
    <rect x="1092" y="369" width="7" height="98" rx="3.500" fill="#7ce9df" /><rect x="1092.500" y="369.500" width="6" height="3" rx="1.500" fill="#62aea8" stroke="#fff" />
  </Chart>
);
const DomesticChart = () => (
  <Chart x={948} y={540} w={125} h={114}>
    <Dots d="M973 561.500H1068M973 611.500H1068" />
    <T x={964.7} y={565} t="5K" a="end" w={12} /><T x={964.7} y={615} t="0K" a="end" w={12} />
    <rect x="997" y="563.300" width="20" height="48" fill="#118dff" /><rect x="1023.500" y="600.300" width="20" height="11" fill="#118dff" />
    <g transform="translate(1003 624) rotate(-35)"><T x={0} y={0} t="False" a="end" w={24} /></g>
    <g transform="translate(1029.500 624) rotate(-35)"><T x={0} y={0} t="True" a="end" w={22} /></g>
  </Chart>
);
const KpiChart = () => (
  <Chart x={1085} y={528} w={110} h={132}>
    <polygon points="1156.700,531.300 1174,560 1190.700,584 1190.700,656 1090,656" fill="#12e0bb" />
    <text transform="translate(1085 592) scale(.84 1)" fontSize="48" letterSpacing="3" fontFamily={DIN} fontWeight="500" fill="#1aab40">1453</text>
    <path d="m1189 574 3 3 3-3.500" stroke="#1aab40" strokeWidth="1.500" fill="none" />
    <T x={1140} y={612} t="Goal: 1453" a="middle" w={66} s={13} f={INK} />
    <T x={1140} y={632} t="(+0%)" a="middle" w={37} s={13} f={INK} />
  </Chart>
);

const BingLogo = ({ x, y }: { x: number; y: number }) => (
  <g><rect x={x} y={y} width="4" height="4" fill="#f25022" /><rect x={x + 4.6} y={y} width="4" height="4" fill="#7fba00" /><rect x={x} y={y + 4.6} width="4" height="4" fill="#00a4ef" /><rect x={x + 4.6} y={y + 4.6} width="4" height="4" fill="#ffb900" />
    <T x={x + 11} y={y + 7.5} t="Microsoft Bing" w={46} s={8} f="#737373" /></g>
);
const LAND = '#f1efeb';
const halo = { stroke: '#fff', strokeWidth: 1.4, paintOrder: 'stroke' } as const;
const AtlanticMap = () => (
  <svg width="245" height="141" viewBox="401 360 245 141">
    <defs>
      <clipPath id="am"><rect x="401" y="360" width="245" height="141" /></clipPath>
      <radialGradient id="hot"><stop offset=".75" stopColor="#640d0f" /><stop offset=".9" stopColor="#a5482e" /><stop offset="1" stopColor="#d8a080" stopOpacity="0" /></radialGradient>
      <radialGradient id="warm"><stop offset="0" stopColor="#eb8a62" /><stop offset=".5" stopColor="#b9c493" /><stop offset="1" stopColor="#b3dba8" stopOpacity=".2" /></radialGradient>
    </defs>
    <g clipPath="url(#am)">
      <rect x="401" y="360" width="245" height="141" fill="#aac5f1" />
      <g transform="translate(380 300) scale(.34436 .33333)" fill={LAND} stroke="#b9bdc4" strokeWidth="1.500" strokeLinejoin="round">
        <path d="M50 170H322L312 180 290 186 275 198 262 202 256 214 245 208 240 220 228 226 218 226 208 238 210 252 198 258 194 268 198 276 195 288 182 294 172 304 160 310 150 322 148 335 158 352 160 368 152 372 144 360 140 346 134 330 128 322 118 328 105 320 95 326 85 335 68 326 50 328z" />
        <path d="M50 420 64 422 78 430 84 418 86 408 108 403 104 416 106 432 116 436 124 446 140 452 136 466 140 484 150 496 166 498 178 504 186 492 196 490 205 482 215 488 225 480 232 492 246 490 262 486 276 486 290 490 300 498 308 500 320 510 336 514 350 524 348 536 356 548 372 556 390 566 404 562 420 570 436 576 450 584 462 590 474 592 480 610H170L176 590 184 570 186 550 182 530 180 514 170 512 160 518 146 506 132 500 118 486 106 474 95 468 76 460 50 452z" />
        <path d="M132 390 150 388 175 400 195 410 180 412 160 400 140 396zM200 414 222 412 240 422 225 428 205 426zM168 422 182 424 176 428zM246 422 262 423 250 427z" />
        <path d="M780 230 756 248 748 262 738 268 740 282 722 288 705 286 696 292 688 300 686 316 678 330 664 342 652 352 646 364 632 376 636 388 628 400 634 410 638 420 628 434 628 452 630 466 642 478 650 492 658 500 668 518 690 532 706 526 732 524 750 530 780 532z" />
        <path d="M686 200 700 196 720 202 740 206 752 222 746 232 742 250 734 256 726 262 716 270 700 262 686 258 688 244 692 230 684 214zM722 170H780V214L766 210 752 214 738 202z" />
        <path d="M130 180 160 190 150 205 146 182zM170 180 200 178 180 196z" fill="#aac5f1" />
        <path d="M61 205 88 208 120 215M90 240 130 236 190 250M61 290 110 284 150 288M120 215 116 260 124 325M160 215 164 250 176 290M690 345H628M690 345 730 388 780 430M660 375V410M700 330V404L690 430M640 460 664 456 700 462 780 470M664 456 680 480V530M710 464 720 490V520M740 470 746 500 740 525M200 500 210 520 222 544 206 560 190 580M240 495 246 515 250 540 276 536 300 520 318 516M276 536 290 560 270 580 240 590M340 545 336 566 330 590M290 560 330 574 370 600M80 455 92 436 110 440M110 460 130 470 132 498M222 544 250 540M692 230 706 236 702 260" fill="none" stroke="#a9a8a6" strokeWidth="2.200" />
      </g>
      <circle cx="417.800" cy="373" r="10" fill="url(#hot)" /><circle cx="407.500" cy="390" r="8" fill="url(#warm)" /><circle cx="418" cy="490" r="10" fill="url(#hot)" />
      <circle cx="640" cy="490" r="6" fill="#a8d4d8" opacity=".5" />
      <g><T x={514} y={406} t="Atlantic" w={43} s={10.5} f="#4b6bab" /><T x={519} y={418} t="Ocean" w={34} s={10.5} f="#4b6bab" /></g>
      <BingLogo x={406} y={484.5} />
      <g fontFamily="'Liberation Sans', Arial, sans-serif" fontSize="8.600" {...halo}>
        <text x="426" y="485.500" fill="#222" textLength="169">© 2025 TomTom, © 2025 Microsoft Corporation,</text>
        <text x="602" y="485.500" fill="#3a59b5" textLength="22" textDecoration="underline">Terms</text>
        <text x="531" y="494.500" fill="#3a59b5" textLength="65" textDecoration="underline">© OpenStreetMap</text>
      </g>
    </g>
  </svg>
);

const ids: [string, string, number][] = [['1322996', '#a66a7a', 471.6], ['1333419', '#fd4040', 533], ['1348661', '#60607c', 594], ['1353154', '#3c5c14', 654.8], ['1379255', '#1f9a85', 716], ['1382004', '#6f7563', 776.7], ['1415642', '#15c6f4', 838]];
const ArrestMap = () => (
  <Chart x={443} y={554} w={479} h={99}>
    <T x={447} y={575} t="ID" b={600} s={12.3} w={12.5} />
    {ids.map(([n, c, x]) => <g key={n}><circle cx={x} cy="570.500" r="4.600" fill={c} /><T x={x + 7} y={574.9} t={n} w={44} s={12.3} /></g>)}
    <path d="M909 563h3l5.500 7-5.500 7h-3z" fill="#fff" /><path d="m911 565 5 5.500-5 5.500z" fill={INK} />
    <clipPath id="em"><rect x="447" y="583" width="471" height="66" /></clipPath>
    <g clipPath="url(#em)">
      <rect x="447" y="583" width="471" height="66" fill="#aac5f1" />
      <g transform="translate(380 300) scale(.34436 .33333)" stroke="#b9bdc4" strokeWidth="1.500" fill={LAND} strokeLinejoin="round">
        <path d="M905 850 898 858 885 862 876 872 860 872 848 868 850 884 830 886 812 890 798 892 786 900 795 908 812 914 832 916 830 928 838 940 834 958 834 975 830 990 826 1004 804 1002 780 1006 750 1006 722 1010 724 1030 716 1060H870L880 1040 880 1030 896 1022 898 1008 918 998 932 994 948 986 962 976 978 982 990 984 996 996 1010 1010 1024 1022 1040 1034 1064 1060H1120L1106 1040 1086 1024 1070 1010 1060 996 1040 985 1036 966 1048 960 1060 962 1066 974 1080 984 1100 1002 1120 1014 1144 1024 1160 1036 1180 1060H1250L1262 1040 1262 1030 1282 1028 1300 1030 1296 1012 1290 990 1290 970 1296 956 1310 938 1330 940 1346 930 1370 934 1366 944 1352 952 1362 966 1372 968 1388 958 1404 956 1420 944 1444 928 1440 944 1432 956 1420 972 1436 984 1450 990 1474 1000 1500 1010 1520 1030 1600 1040V840H920z" />
        <path d="M768 850H815L800 856zM1284 1042 1320 1034 1360 1036 1400 1030 1470 1036 1500 1050V1060H1280z" />
        <path d="M905 850 922 862 940 880 958 886 975 895 966 904 960 915 946 930 950 950 960 976M975 850 982 870 990 890 1014 884 1040 886M1040 886 1054 878 1065 862 1084 862 1100 870 1116 880 1130 895 1114 900 1100 910 1080 912 1060 904 1046 914 1035 918 1010 925 984 920 960 918M1130 895 1160 888 1190 890 1205 905 1180 914 1164 932 1150 935 1124 940 1100 935 1082 924 1060 925M1205 905 1230 908 1250 900 1266 916 1286 940M1205 905 1176 924 1160 944 1140 950 1112 950 1080 955M1150 950 1160 970 1180 985 1210 992 1240 988 1270 1000M1180 985 1166 1004 1170 1030M1090 962 1100 984 1120 982 1150 996M1130 850 1144 862 1170 870 1190 880 1204 870 1230 850M1230 850 1222 866 1220 880 1195 892M1250 900 1272 896 1290 910 1290 935 1300 915 1284 896 1270 895M1430 850 1442 866 1445 880 1420 890 1400 910 1380 925M1010 925 986 936 960 945 940 930M960 976 950 966 962 956M720 1015 770 1018 830 1010 900 1020M1215 1000 1216 1024 1212 1047M1020 850 1040 860 1065 862" fill="none" stroke="#8a8987" strokeWidth="3.400" />
        <path d="M1440 890 1455 876 1470 860 1490 874 1520 880 1540 866 1568 860M1440 930 1462 944 1480 970 1494 950 1510 940 1534 956 1568 960M1500 880 1506 900 1520 920 1510 944 1500 960 1520 970 1540 990M1400 990 1440 1000 1500 1004" fill="none" stroke="#b3b1af" strokeWidth="2" strokeDasharray="6 4" />
        <g stroke="none"><path d="m800 892 22 2-4 12-14-2z" fill="#c3a8f0" /><path d="m838 880 20-4-4 12-14 2z" fill="#f2c2b8" /><path d="m904 896 14-6 8 10-12 10z" fill="#8fce9c" /><path d="m836 946 12 8-2 14-10-8z" fill="#6b6b6b" /><path d="m848 954 14 2v12h-10z" fill="#ead6a6" /><path d="m856 962 16 4-4 14-12-4z" fill="#7d8a55" /><path d="m872 962 16-4 2 14-14 4z" fill="#d455e0" /><path d="m884 968 16 2-4 12-10-4z" fill="#6fa58c" /><path d="m882 984 16-4 4 16-14 2z" fill="#a8808a" /><path d="m882 1010 14 0-4 10-10-2z" fill="#e055b0" /></g>
      </g>
      <BingLogo x={452} y={632} />
      <g fontFamily={UI} fontWeight="700" fontSize="8.600" {...halo} fill="#1c1c1c">
        <text x="667.500" y="614" textLength="37">FRANCE</text><text x="725.500" y="611" textLength="39">AUSTRIA</text><text x="774.500" y="623" textLength="48">ROMANIA</text><text x="807" y="593" textLength="44">UKRAINE</text>
      </g>
      <T x={822} y={639} t="Black Sea" w={43} s={8.5} f="#4b6bab" />
      <g fontFamily="'Liberation Sans', Arial, sans-serif" fontSize="8.600" {...halo}>
        <text x="630" y="642.300" fill="#222" textLength="170">© 2025 TomTom, © 2025 Microsoft Corporation,</text>
        <text x="802.500" y="642.300" fill="#3a59b5" textLength="64" textDecoration="underline">© OpenStreetMap</text>
        <text x="874" y="642.300" fill="#3a59b5" textLength="22" textDecoration="underline">Terms</text>
      </g>
    </g>
  </Chart>
);

/* treemap blocks: left, top, right, bottom, colour */
const blocks: [number, number, number, number, string][] = [
  [691, 172, 1076, 484, '#118dff'], [691, 485, 1076, 629, '#12239e'], [1076, 172, 1242, 458, '#e66c37'], [1076, 459, 1242, 544, '#6b007b'],
  [1076, 545, 1242, 629, '#e044a7'], [1242, 172, 1326, 337, '#744ec2'], [1326, 172, 1403, 337, '#d9b300'], [1403, 172, 1475, 337, '#d64550'],
  [1242, 338, 1312, 411, '#197278'], [1242, 412, 1312, 466, '#1aab40'], [1242, 467, 1312, 510, '#15c6f4'], [1242, 511, 1312, 552, '#4092ff'],
  [1242, 553, 1312, 594, '#ffa058'], [1242, 595, 1312, 629, '#be5dc9'], [1313, 338, 1348, 405, '#f472d0'], [1348, 338, 1383, 405, '#b5a1ff'],
  [1383, 338, 1415, 405, '#c4a200'], [1415, 338, 1445, 405, '#ff8080'], [1445, 338, 1475, 405, '#00dbbc'], [1313, 406, 1345, 461, '#5bd667'],
  [1345, 406, 1376, 461, '#0091d5'], [1376, 406, 1407, 461, '#4668c5'], [1407, 406, 1433, 461, '#ff6300'], [1433, 406, 1455, 461, '#99008a'],
  [1455, 406, 1475, 461, '#ec008c'], [1313, 462, 1343, 494, '#533285'], [1313, 494, 1343, 523, '#99700a'], [1313, 523, 1343, 551, '#ff4141'],
  [1313, 551, 1343, 580, '#1f9a85'], [1313, 580, 1343, 605, '#25891c'], [1313, 605, 1343, 629, '#0057a2'], [1343, 462, 1370, 486, '#002050'],
  [1343, 486, 1370, 510, '#c94f0f'], [1343, 510, 1370, 535, '#450f54'], [1343, 535, 1370, 560, '#b60064'], [1343, 560, 1370, 583, '#34124f'],
  [1343, 583, 1370, 607, '#6a5a29'], [1343, 607, 1370, 629, '#1aab40'], [1370, 462, 1385, 497, '#ba141a'], [1385, 462, 1401, 497, '#0c3d37'],
  [1401, 462, 1416, 497, '#0b511f'], [1416, 462, 1431, 497, '#3d1a3f'], [1431, 462, 1446, 497, '#ffa058'], [1446, 462, 1460, 497, '#a4e629'], [1460, 462, 1475, 497, '#5f6b6d'],
];
const seams = 'M935 172V484M691 377H935M1027 172V352M935 352H1076M1018 352V484M935 436H1018M1059 352V415M1018 415H1076M1049 415V484M1018 437H1049M1049 446H1076M1018 470H1076M1063 446V484' +
  'M787 485V629M787 583H900M900 485V629M900 545H981M900 589H981M981 485V629M981 569H1076M1016 485V569M1048 485V569M981 604H1036M1036 569V629M1060 569V606M1036 606H1076M1050 606V629M1036 617H1076' +
  'M1076 283H1242M1161 172V283M1149 283V458M1076 345H1149M1076 406H1149M1189 283V373M1215 283V373M1149 373H1242M1149 418H1200M1200 373V458M1228 373V430M1200 430H1242M1215 430V458M1228 430V458M1200 444H1242' +
  'M1159 459V544M1159 514H1198M1198 459V544M1198 500H1242M1220 459V544M1198 520H1242M1230 500V544M1142 545V629M1142 598H1212M1212 545V629M1212 585H1242M1212 605H1242M1228 585V629' +
  'M1242 322H1326M1264 322V337M1282 322V337M1303 322V337M1315 322V337M1373 172V283M1326 283H1403M1371 283V337M1371 312H1403M1388 283V337M1396 290V337M1272 412V466M1272 440H1312M1290 412V466M1302 412V466' +
  'M1284 467V510M1242 490H1312M1298 467V510M1284 511V552M1298 511V552M1284 535H1312M1284 553V594M1284 575H1312M1298 575V594M1280 595V629M1280 612H1312M1298 595V629' +
  'M1348 380H1383M1366 380V405M1372 338V380M1415 374H1445M1432 338V374M1430 374V405M1313 434H1345M1330 406V461M1345 438H1376M1361 438V461M1376 434H1407M1392 434V461M1407 434H1433M1420 406V461M1433 430H1475M1444 406V461M1465 406V461M1433 446H1475' +
  'M1328 523V580M1330 462V494M1357 462V486M1357 535V629M1313 593H1370M1378 462V497M1385 480H1475M1408 462V497M1438 462V497';
const palette = ['#f2e26b', '#f5c4af', '#7a2b8f', '#1aab8f', '#0b3a5e', '#2e2e5e', '#c4a58a', '#118dff', '#222831', '#4f6b9a', '#3a0f3f', '#8f8a86', '#6fbf4a', '#2b2b2b', '#e044a7', '#1f3d2b', '#8ad4eb', '#a66999', '#5f6b6d', '#d64550', '#b0e04a', '#503c2a'];
const mosaic: { x: number; y: number; w: number; h: number; c: string }[] = [];
for (let c = 0, x = 1370; x < 1474; c++) {
  const w = Math.max(5, 19 - c * 2);
  let y = 497;
  for (let r = 0; y < 629; r++) {
    const h = Math.min(Math.max(6, 24 - c * 2 - ((r * 3 + c) % 5) * 2 - r), 629 - y);
    mosaic.push({ x, y, w: Math.min(w, 1475 - x), h, c: palette[(c * 7 + r * 5 + ((c * r) % 3)) % palette.length] });
    y += h;
  }
  x += w;
}
const tmLabels: [number, number, string, number?][] = [
  [844, 714, 'STREET', 38], [844, 761, 'HOMICIDE', 51], [844, 797, 'THEFT', 30], [950, 753, 'BAT...', 26], [950, 781, 'RO...', 22], [844, 817.5, 'RESIDENCE', 59], [844, 845, 'OFFE...', 32],
  [1011, 714, 'APARTME...', 59], [1011, 751, 'OF...', 21], [1011, 771, 'BA...', 21], [1011, 809, 'ALLEY', 32], [1011, 838, 'SIDEWALK', 55], [1083, 714, '0', 7], [1083, 743, 'DEC...', 27],
  [1119.5, 714, 'OT...', 23], [1153, 714, 'A...', 16], [1153, 748.5, 'H...', 15], [1083, 769, 'H...', 17],
];
const TreeMap = () => (
  <Chart x={835} y={695} w={349} h={159}>
    <g transform="translate(540 640) scale(.43367 .33333)">
      {blocks.map(([a, b, c, d, f]) => <rect key={`${a}-${b}`} x={a} y={b} width={c - a} height={d - b} fill={f} stroke="#a9e9e6" strokeWidth=".8" vectorEffect="non-scaling-stroke" />)}
      {mosaic.map(m => <rect key={`${m.x}-${m.y}`} x={m.x} y={m.y} width={m.w} height={m.h} fill={m.c} stroke="#d8dfe0" strokeWidth=".4" vectorEffect="non-scaling-stroke" />)}
      <path d={seams} stroke="#fff" strokeOpacity=".42" strokeWidth="1" vectorEffect="non-scaling-stroke" fill="none" />
    </g>
    {tmLabels.map(([x, y, t, w]) => <T key={`${x}-${y}`} x={x} y={y} t={t} w={w} s={11.5} f="#fff" />)}
  </Chart>
);

/* ---------- tables ---------- */
const cases = [['2013', 'B780332', '1'], ['2001', 'G005470', '1'], ['2001', 'G005960', '1'], ['2001', 'G007852', '1']];
const days = [4, 4, 9, 13, 7, 18, 5, 9];
const SortMark = () => <svg width="8" height="4"><path d="M0 4 4 0l4 4z" fill={INK} /></svg>;

/* ---------- task bar ---------- */
const Win = () => <svg width="29" height="29"><g fill="#4cc2ff"><path d="M0 0h14v14H0zM15 0h14v14H15zM0 15h14v14H0zM15 15h14v14H15z" /></g></svg>;
const apps: [React.ReactNode, boolean][] = [
  [<svg width="30" height="30"><rect x="9" y="2" width="20" height="19" rx="2" fill="#f4f4f4" /><rect x="1" y="9" width="20" height="19" rx="2" fill="#777b80" opacity=".92" /></svg>, false],
  [<CopilotMark w={30} />, false],
  [<svg width="30" height="30" viewBox="0 0 30 30"><circle cx="15" cy="15" r="14.500" fill="#34a853" /><path d="M15 .5a14.500 14.500 0 0 1 12.600 7.200H15a7.300 7.300 0 0 0-6.800 5L2.300 7.900A14.500 14.500 0 0 1 15 .5z" fill="#ea4335" /><path d="M27.600 7.700A14.500 14.500 0 0 1 15 29.500l6.400-11A7.300 7.300 0 0 0 19 8z" fill="#fbbc04" /><circle cx="15" cy="15" r="7" fill="#fff" /><circle cx="15" cy="15" r="5.500" fill="#1a73e8" /></svg>, true],
  [<svg width="30" height="30"><path d="M0 4q0-2 2-2h8l4 4h14q2 0 2 2v4H0z" fill="#e8a60c" /><rect y="7" width="30" height="20" rx="2" fill="#ffd35c" /><path d="M5 27v-4q0-3 3-3h14q3 0 3 3v4z" fill="#1b7fd1" /><path d="M10 24h10" stroke="#0b4f8a" strokeWidth="2" /></svg>, true],
  [<svg width="30" height="30" viewBox="0 0 30 30"><defs><linearGradient id="eg" x1="0" y1="0" x2="1" y2=".3"><stop offset="0" stopColor="#1fa2e0" /><stop offset="1" stopColor="#5fe06a" /></linearGradient></defs><circle cx="15" cy="15" r="14.500" fill="#1173c9" /><path d="M.8 13A14.500 14.500 0 0 1 29.500 14c0 5-4 7-8 7s-5-2-3.500-4 1-7-6-7S1.500 13 .8 13z" fill="url(#eg)" /><path d="M18 17q-3 5 4 5 4 0 6.500-2Q23 30 15 29 8 26 11 17q3-5 6-3 2 1 1 3z" fill="#0c4f9e" opacity=".75" /></svg>, false],
  [<svg width="30" height="30"><path d="M9 8V3q0-2 2-2h8q2 0 2 2v5" fill="none" stroke="#28a8ea" strokeWidth="2" /><rect x="1" y="6" width="28" height="23" rx="3" fill="#f3f3f3" /><path d="M9 12h5v5H9z" fill="#f25022" /><path d="M16 12h5v5h-5z" fill="#7fba00" /><path d="M9 19h5v5H9z" fill="#00a4ef" /><path d="M16 19h5v5h-5z" fill="#ffb900" /></svg>, false],
  [<svg width="30" height="30"><defs><linearGradient id="ig" x1=".1" y1="1" x2=".7" y2="0"><stop offset="0" stopColor="#ffb83d" /><stop offset=".4" stopColor="#f3304a" /><stop offset=".75" stopColor="#c82ba3" /><stop offset="1" stopColor="#5b4fe0" /></linearGradient></defs><rect width="30" height="30" rx="7" fill="url(#ig)" /><rect x="6" y="6" width="18" height="18" rx="5" fill="none" stroke="#fff" strokeWidth="2.200" /><circle cx="15" cy="15" r="4.500" fill="none" stroke="#fff" strokeWidth="2.200" /><circle cx="20.500" cy="9.500" r="1.300" fill="#fff" /></svg>, false],
  [<svg width="30" height="30"><path d="M21 0v9L4 22.500 0 20v-2z" fill="#1472bd" /><path d="M21 30v-9L4 7.500 0 10v2z" fill="#1c8ad8" /><path d="m21 0 8 4v22l-8 4z" fill="#35a8f0" /></svg>, false],
  [<svg width="30" height="30"><path d="M3 0h15l5 6v22H3z" fill="#eee" /><path d="M6 5h10M6 9h13M6 13h9M6 17h7" stroke="#aaa" /><path d="M15 14q0-3 5-3t5 3v5h-7q-4 0-4 3-3 0-3-3.500t4-3.500z" fill="#3c78aa" /><path d="M29 18q2 7-3 7h-3q0 4-4 4-5 0-4-5 0-3 4-3h7v-4z" fill="#ffd43b" /></svg>, false],
  [<svg width="30" height="30"><circle cx="17" cy="6" r="5" fill="#7b83eb" /><circle cx="26" cy="8" r="3.500" fill="#5059c9" /><path d="M22 12h8v9q-1 5-7 4z" fill="#5059c9" /><path d="M10 12h14v10q-1 8-8 7-6-1-6-8z" fill="#7b83eb" /><rect y="9" width="16" height="15" rx="2" fill="#4b53bc" /><text x="4.500" y="20.500" fontSize="11" fontWeight="700" fontFamily={UI} fill="#fff">T</text></svg>, false],
  [<svg width="30" height="30"><rect x="8" y="1" width="22" height="27" rx="2" fill="#21a366" /><path d="M19 1h9q2 0 2 2v5H19z" fill="#33c481" /><path d="M8 15h22v11q0 2-2 2H10q-2 0-2-2z" fill="#107c41" /><rect y="7" width="16" height="16" rx="2" fill="#0e6b38" /><text x="4" y="19" fontSize="11" fontWeight="700" fontFamily={UI} fill="#fff">X</text></svg>, true],
  [<svg width="30" height="30"><path d="M15 0h9q2 0 2 2v28H14V2z" fill="#e0a30c" /><path d="M9 8h9q2 0 2 2v20H9z" fill="#f2c22e" /><path d="M4 16h9q2 0 2 2v12H6q-2 0-2-2z" fill="#fbd95a" /></svg>, true],
];

const ToolButton = ({ def: [icon, w, a, b, drop, dim] }: { def: ToolDef }) => (
  <Tool $w={w} $dim={dim}>
    {tools[icon]}
    <ToolLine $first>{a}</ToolLine>
    <ToolLine>{b}{drop && <Drop dim={dim} />}</ToolLine>
  </Tool>
);

export default function App() {
  return (
    <Shell>
      <Global />
      <TitleBar>
        <QuickAccess>
          <Svg w={19} h={19} s="#d8d8d8" sw={1.5}><path d="M1 1h17v17H3.500L1 15.500zM5 1v6.500h9.500V1M5.500 18v-6h8.500v6M8.500 18v-3" /></Svg>
          <Svg w={17} h={19} s="#7d7b79" sw={1.4}><path d="M.8 0v8h8M1 7.500Q7 .5 13 3q5 4 1.500 9.500L8.500 19" /></Svg>
          <Svg w={17} h={19} s="#7d7b79" sw={1.4}><path d="M16.200 0v8h-8M16 7.500Q10 .5 4 3q-5 4-1.500 9.500L8.500 19" /></Svg>
          <DocName>
            <span>guvi project 2 final • Last saved: Today at 8:56 AM</span>
            <svg width="10" height="6"><path d="M0 0h10L5 6z" fill="#fff" /></svg>
          </DocName>
        </QuickAccess>
        <TitleSearch><Lens />Search</TitleSearch>
        <WindowSide>
          Sign in
          <Avatar><svg width="25" height="25"><circle cx="12.500" cy="12.500" r="12.500" fill="#f3f2f1" /><g fill="none" stroke="#252423" strokeWidth="1.500"><circle cx="12.500" cy="7" r="3.500" /><path d="M6.500 13.500h12q1 0 1 1-1 6-7 6.500-6-.5-7-6.500 0-1 1-1z" /></g></svg></Avatar>
          <WindowButtons>
            <Svg w={14} h={14} s="#fff" sw={1.2}><path d="M.5 7h13" /></Svg>
            <Svg w={14} h={14} s="#fff" sw={1.3}><rect x=".7" y=".7" width="12.500" height="12.500" rx="1.500" /></Svg>
            <Svg w={14} h={14} s="#fff" sw={1.3}><path d="m.7.7 12.600 12.600M13.300.7.7 13.300" /></Svg>
          </WindowButtons>
        </WindowSide>
      </TitleBar>

      <MenuBar>
        <MenuItem $w={73.5}><span>File</span></MenuItem>
        <MenuItem $w={86.5} $on><span>Home</span></MenuItem>
        <MenuItem $w={83.5}><span>Insert</span></MenuItem>
        <MenuItem $w={113.5}><span>Modeling</span></MenuItem>
        <MenuItem $w={75.5}><span>View</span></MenuItem>
        <MenuItem $w={109.5}><span>Optimize</span></MenuItem>
        <MenuItem $w={60}><span>Help</span></MenuItem>
        <ShareButton>
          <Svg w={20} h={20} s="#fff" sw={1.5}><path d="M1 7v12h14v-4M5 14q1-7 8-7V3l6.500 5.500L13 14v-3.500Q8 10 5 14z" /></Svg>
          <Tight>Share<Svg w={12} h={8} s="#fff"><path d="m.7 1 5.300 5.500L11.300 1" /></Svg></Tight>
        </ShareButton>
      </MenuBar>

      <Ribbon>
        <Group $w={200}>
          <GroupBody $pad={15}>
            <Tool $w={40} $dim>
              <Svg s="#bdbbb9"><path d="M11 7H7v30.500h15M29 7h4v8" stroke="#f6d3a2" strokeWidth="2.500" /><path d="M12 10V7q3 0 4-1 1-4 4-4t4 4q1 1 4 1v3z" fill="#fafafa" /><R x={23} y={17} w={17} h={22} f="#fafafa" s="#b3b1af" /></Svg>
              <ToolLine $first>Paste</ToolLine>
            </Tool>
            <ClipRows>
              <ClipRow><Svg w={20} h={20} s="#b8b6b4" sw={1.4}><path d="m6 0 7 14M14 0 7 14" /><circle cx="6" cy="17" r="2.500" stroke="#a9cfe8" /><circle cx="14" cy="17" r="2.500" stroke="#a9cfe8" /></Svg>Cut</ClipRow>
              <ClipRow><Svg w={20} h={20} s="#b8b6b4" sw={1.4}><path d="M8 17H1V1h6l3 3v2" /><path d="M8 5h7l4.500 4.500V19H8zM14.500 5v5H20M11 12.500h6M11 15.500h6" /></Svg>Copy</ClipRow>
              <ClipRow><Svg w={20} h={20} s="#b8b6b4" sw={1.4}><path d="m1 10 7-3 6 6-4 6q-5-2-9-9z" fill="#fbe8cf" stroke="#f3cf9c" /><path d="m7 7 3-3 8 8-3 2zM13 7l5-6 2 2-5 6" /></Svg>Format painter</ClipRow>
            </ClipRows>
          </GroupBody>
          <GroupName>Clipboard</GroupName>
        </Group>
        {groups.map(g => (
          <Group key={g.name} $w={g.w}>
            <GroupBody $pad={g.pad}>{g.tools.map(t => <ToolButton key={t[0]} def={t} />)}</GroupBody>
            <GroupName>{g.name}</GroupName>
          </Group>
        ))}
        <Collapse><Svg w={10} h={8} s={INK} sw={2}><path d="m.7 6.500 4.300-4.500 4.300 4.500" /></Svg></Collapse>
      </Ribbon>

      <Main>
        <Rail>
          <RailItem $on><Svg w={18} h={19} s="#111" sw={1.5}><path d="M1 0v18h17" /><rect x="4" y="4" width="2.800" height="11" fill="#ccc" /><rect x="9" y="7" width="2.800" height="8" fill="#ccc" /><rect x="13.800" y="1.500" width="2.800" height="13.500" fill="#ccc" /></Svg></RailItem>
          <RailItem><Svg w={21} h={20} s="#797775" sw={1.5}><path d="M1 1h19v18H1zM1 4h19M1 9h19M1 14h19M7.500 4v15M13.500 4v15" /></Svg></RailItem>
          <RailItem><Svg w={23} h={23} s="#797775" sw={1.5}><path d="M1 7.500h9V16H1zM14 1h8.500v8.500H14zM14 13.500h8.500V22H14zM1 10h9M14 3.500h8.500M14 16h8.500M6 7V4h8M6 16v2.500h8" /></Svg></RailItem>
          <RailItem><Svg w={23} h={22} s="#797775" sw={1.5}><path d="M6 12V3q0-2 2-2h6l5 5v10q0 2-2 3M13.500 1v5.500H19M21.500 8v9q0 3-3 3.500" /><text x="0" y="20.500" fontSize="8.500" fontWeight="700" fontFamily={UI} fill="#797775" stroke={PANE} strokeWidth="2" paintOrder="stroke">DAX</text></Svg></RailItem>
        </Rail>

        <Center>
          <CenterRow>
            <Canvas>
              <Over $x={68} $y={217}><Svg w={28} h={28} s="#605e5c" sw={2.4}><circle cx="13.700" cy="13.700" r="12.300" /><path d="M22 14H7M13.500 7l-7 7 7 7" /></Svg></Over>
              <Visual $x={110} $y={230} $w={1094} $h={91}><PageTitle>CHICAGO CRIME ANALYSIS</PageTitle></Visual>
              <Visual $x={73} $y={324} $w={288} $h={195}><VTitle>Count of Case Number and Count of ID by<br />Year</VTitle><LineChart /></Visual>
              <Visual $x={396} $y={321} $w={255} $h={185}>
                <VTitle>Count of ID by Latitude and<br />Longitude</VTitle>
                <MapPad><AtlanticMap /></MapPad>
              </Visual>
              <Visual $x={681} $y={321} $w={219} $h={189}><VTitle>Count of Year and Count of<br />Location by Primary Type</VTitle><PercentChart /></Visual>
              <Visual $x={1085} $y={475} $w={110} $h={185}><VTitle>Count of ID and<br />Count of<br />Arrest by Qua...</VTitle><KpiChart /></Visual>
              <Visual $x={948} $y={324} $w={156} $h={169}><VTitle>Count of Location<br />Description by IUCR</VTitle><IucrChart /></Visual>
              <Visual $x={948} $y={504} $w={125} $h={150}><VTitle>Count of ID by<br />Domestic</VTitle><DomesticChart /></Visual>
              <Over $x={1173} $y={322}><MoreBox><i /><i /><i /></MoreBox></Over>

              <Visual $x={72} $y={534} $w={251} $h={127}>
                <Row>
                  <GridTable $cols="63px 80px 71px">
                    <Head>Year</Head><Head>Case Number<SortMark /></Head><Head $r>Count of ID</Head>
                    {cases.map((r, i) => r.map((c, j) => (
                      <Cell key={`${i}${j}`} $bg={i % 2 ? '#ececec' : '#fff'} $line={i % 2 ? '#d9eceb' : '#d5f0ee'} $r={j !== 1} $short={i === 3}>{c}</Cell>
                    )))}
                    <Foot $r>Total</Foot><Foot /><Foot $r>5809</Foot>
                  </GridTable>
                  <ScrollTrack $h={119} $ml={18}><i /></ScrollTrack>
                </Row>
              </Visual>

              <Visual $x={443} $y={535} $w={479} $h={119}><VTitle>Count of Arrest by District and ID</VTitle><ArrestMap /></Visual>

              <Visual $x={72} $y={677} $w={251} $h={178}>
                <Row>
                  <Story>
                    <p>All metrics trended down between <u>2001</u> and<br /><u>2024</u>, each decreasing by <u>58.54%</u>.</p>
                    <p>Count of Year and total Count of Location<br />are negatively correlated with each other.</p>
                    <p>Count of ID for <u>False</u> (<u>4,742</u>) was higher than<br /><u>True</u> (<u>1,067</u>).</p>
                    <p><u>False</u> had <u>4,742</u> Count of ID and <u>True</u> had<br /><u>1,067</u>.</p>
                  </Story>
                  <StoryBar />
                </Row>
              </Visual>

              <Visual $x={361} $y={654} $w={183} $h={201}>
                <Row>
                  <GridTable $cols="37.5px 55.5px 70px">
                    <Head>Day</Head><Head>Month<SortMark /></Head><Head $r>Count of ID</Head>
                    {days.map((n, i) => [String(i + 1), 'January', String(n)].map((c, j) => (
                      <Cell key={`${i}${j}`} $bg={i % 2 ? '#0d6abf' : '#d64550'} $line={i % 2 ? '#6fb6d2' : '#c8a9ac'} $r={j !== 1} $short={i === 7}>{c}</Cell>
                    )))}
                    <Foot $r>Total</Foot><Foot /><Foot $r>5809</Foot>
                  </GridTable>
                  <ScrollTrack $h={192} $ml={2}><i /></ScrollTrack>
                </Row>
              </Visual>

              <Visual $x={558} $y={677} $w={247} $h={178}>
                <QnaRow>
                  <QnaComment><Svg w={12} h={12} s={INK} sw={1.1}><path d="M.5 1h11v8H5l-2.500 2.500V9H.5z" /></Svg></QnaComment>
                  <QnaBox><u>Sheet 1 district</u><br />sorted</QnaBox>
                  <QnaIcons>
                    <Svg w={13} h={13} s={INK} sw={1.1}><path d="M5 8.500H.5v-5H7M5 6h7.500v6H5zM9 2.500h3V6M9 1l1.500 1.500L9 4" /></Svg>
                    <Svg w={13} h={13} s={INK} sw={1.1}><circle cx="6.500" cy="6.500" r="2" /><circle cx="6.500" cy="6.500" r="4.800" /><circle cx="6.500" cy="6.500" r="5.800" strokeDasharray="2 2.500" /></Svg>
                  </QnaIcons>
                </QnaRow>
                <InfoRow><Svg w={13} h={13} s={INK} sw={1}><circle cx="6.500" cy="6.500" r="5.900" /><path d="M6.500 5.500v4.500M6.500 3v1.300" /></Svg></InfoRow>
                <BigNumber>65K</BigNumber>
                <SumLabel>Sum of District</SumLabel>
              </Visual>

              <Visual $x={835} $y={659} $w={349} $h={196}><VTitle $ls={-0.12}>Count of ID and Count of Location Description<br />YoY% by Location Description and Primary Type</VTitle><TreeMap /></Visual>

              <PageFrame><svg width="1145" height="645"><rect x="1" y="1" width="1143" height="643" fill="none" stroke="#605e5c" strokeWidth="2" strokeDasharray="2 2" /></svg></PageFrame>
            </Canvas>

            <FiltersPane>
              <PaneHead $l={14} $r={12}>
                <HeadLabel><Svg w={22} h={19} s="#252423" sw={1.8}><path d="M1.500 1h19l-7 8.500V18H8.500V9.500z" /></Svg><HeadText>Filters</HeadText></HeadLabel>
                <HeadIcons>
                  <Svg w={17} h={11} s="#252423" sw={1.5}><path d="M1 7Q2 1 8.500 1T16 7" /><circle cx="8.500" cy="7" r="2.300" /></Svg>
                  <Chevrons />
                </HeadIcons>
              </PaneHead>
              <FilterSearch><Lens w={19} />Search</FilterSearch>
              <Rule />
              <FilterLabel $top={21}><span>Filters on this page</span><span>...</span></FilterLabel>
              <DropBox>Add data fields here</DropBox>
              <FilterLabel $top={34}><span>Filters on all pages</span><span>...</span></FilterLabel>
              <DropBox>Add data fields here</DropBox>
            </FiltersPane>
          </CenterRow>
          <TabsRow>
            <ViewIcon $on $w={30}><Svg w={25} h={22} s="#605e5c"><path d="M1 4h23v12.500H1zM12.500 16v5M7 21h11" /></Svg></ViewIcon>
            <ViewIcon $w={30}><Svg w={16} h={25} s="#605e5c" sw={1.8}><rect x="1" y="1" width="14" height="23" rx="1.500" /><path d="M7 20.500h2" /></Svg></ViewIcon>
            <PagerArrows><svg width="35" height="10"><path d="M6 0v10L0 5zM29 0v10l6-5z" fill="#c8c6c4" /></svg></PagerArrows>
            <PageTab>Page 1</PageTab>
            <AddTab><Svg w={12} h={12} s="#fff" sw={3}><path d="M6 0v12M0 6h12" /></Svg></AddTab>
          </TabsRow>
        </Center>

        <Pane $w={226}>
          <PaneHead $l={10} $r={10}><HeadText>Visualizations</HeadText><Chevrons /></PaneHead>
          <BuildLabel>Build visual</BuildLabel>
          <BuildTabs>
            <BuildTab><Svg w={30} h={31}><path d="M0 1h24" /><rect x="1" y="7.500" width="28" height="9" fill={GREEN} stroke="#111" strokeDasharray="2 1.500" /><rect x="1" y="20.500" width="28" height="9" fill={GREEN} stroke="#111" strokeDasharray="2 1.500" /></Svg></BuildTab>
            <Svg w={30} h={31}><path d="M4 29H1V1h12l7 8v3M13 1v8.500h7" /><path d="m15 22 13-11q2 0 1 2L19 26M14 22q4 0 5 4-2 5-11 4 4-2 6-8z" /></Svg>
          </BuildTabs>
          <svg width="222" height="16"><path d="M0 15.500H20L29.500 6 39 15.500H220" fill="none" stroke="#8a8886" strokeWidth="1.200" /></svg>
          <IconGrid>{gallery.map((g, i) => <Svg key={i} w={23} h={23} sw={1.4}>{g}</Svg>)}</IconGrid>
          <MoreDots><i /><i /><i /></MoreDots>
          <PaneRule />
          <WellLabel $top={11}>Values</WellLabel>
          <Well $h={35} $top={6} $pl={12}>Add data fields here</Well>
          <WellLabel $top={14} $semi>Drill through</WellLabel>
          <WellLabel $top={11}>Cross-report<Toggle><i />Off</Toggle></WellLabel>
          <WellLabel $top={14}>Keep all filters<Toggle $on><i />On</Toggle></WellLabel>
          <Well $h={32} $top={13} $pl={10}>Add drill-through fields here</Well>
        </Pane>

        <Pane $w={225}>
          <PaneHead $l={10} $r={9}><HeadText>Data</HeadText><Chevrons /></PaneHead>
          <DataSearch><LensR />Search</DataSearch>
          {['Sheet1', 'Sheet1 (2)'].map(n => (
            <TreeRow key={n}>
              <Svg w={8} h={14} s="#484644" sw={1.3}><path d="m1 .7 6 6.300-6 6.300" /></Svg>
              <Svg w={16} h={16} s="#3b3a39" sw={1.4}><rect x="1" y="1" width="14" height="14" rx="2.500" /><path d="M1 5.500h14M1 10.500h14M5.500 1v14M10.500 1v14" /></Svg>
              <span>{n}</span>
            </TreeRow>
          ))}
        </Pane>
      </Main>

      <StatusBar>
        Page 1 of 1
        <StatusRight>
          <svg width="154" height="16"><path d="M0 6.500h5M143 7h10M148 2v10" stroke="#484644" strokeWidth="1.800" /><path d="M12 7.500h124" stroke="#605e5c" strokeWidth="1.200" /><path d="M73.500 4v7" stroke="#605e5c" /><rect x="51" y="1" width="5" height="13" fill="#605e5c" /></svg>
          <Pct>71%</Pct>
          <Svg w={21} h={16} s="#605e5c"><path d="M1 1h19v14H1zM8 4H5v3M13 4h3v3M8 12H5V9M13 12h3V9" strokeWidth="1.400" /></Svg>
          <Update>Update available (click to download)</Update>
        </StatusRight>
      </StatusBar>

      <TaskBar>
        <Weather>
          <svg width="30" height="38"><circle cx="12" cy="17" r="11.500" fill="#f7a325" /><path d="M6 36q-6-1-4-7 2-4 6-3 3-6 9-3 3 2 3 5 7 0 7 5-1 3-4 3z" fill="#bfd8f5" /><circle cx="21" cy="10" r="9.500" fill="#ff99a4" /><text x="17.500" y="15" fontSize="13" fontFamily={UI} fill="#222">1</text></svg>
          <WeatherText>82°F<br /><span>Partly sunny</span></WeatherText>
        </Weather>
        <StartButton><Win /></StartButton>
        <TaskSearch>
          <LensR w={19} c="#fff" sw={1.7} />Search
          <svg width="48" height="30" viewBox="0 0 48 30">
            <ellipse cx="24" cy="10" rx="17" ry="9" fill="#3f8f3a" /><path d="M12 20 3 8q3-4 6 0l8 10zM36 20l9-10q1-4-3-4L32 18z" fill="#f0a030" /><path d="M10 6q-2-5 3-4l5 8zM34 2q6-3 8 1l-8 8z" fill="#7cc242" />
            <circle cx="20" cy="6" r="4.500" fill="#e3422f" /><circle cx="29" cy="7" r="4.500" fill="#f2b632" /><circle cx="24" cy="15" r="5" fill="#8c2d8c" /><circle cx="33" cy="14" r="4.500" fill="#d9352c" /><circle cx="15" cy="14" r="4" fill="#f6d04a" />
            <path d="M7 18q17 6 34 0-3 9-9 11H16q-6-2-9-11z" fill="#b8742c" /><path d="M10 22q14 4 28 0" stroke="#8a5218" strokeWidth="1.500" fill="none" /><circle cx="24" cy="18" r="4" fill="#8c2d8c" />
          </svg>
        </TaskSearch>
        <TaskApps>{apps.map(([a, run], i) => <TaskApp key={i} $run={run}>{a}</TaskApp>)}</TaskApps>
        <Tray>
          <Svg w={12} h={8} s="#fff"><path d="m.7 7 5.300-5.500L11.300 7" /></Svg>
          <Lang>ENG<br />IN</Lang>
          <TrayIcons>
            <Svg w={19} h={16} s="#fff" sw={1.5}><path d="M1 6q8.500-8 17 0M3.500 9q6-5.500 12 0M6.300 11.800q3.200-2.800 6.400 0" /><circle cx="9.500" cy="14" r="1.200" fill="#fff" /></Svg>
            <Svg w={19} h={18} s="#fff" sw={1.3}><path d="M1 6.500h3L9 2v14l-5-4.500H1zM11.500 6q2 3 0 6M14 4q3.500 5 0 10M16.500 2q4.500 7 0 14" /></Svg>
            <Svg w={20} h={16} s="#fff" sw={1.3}><rect x="3" y="4" width="14" height="9" rx="2" /><rect x="8" y="6" width="7" height="5" fill="#fff" /><path d="M18.500 7v3" /><path d="m1 6 2-5h4v8H3" fill="#fff" stroke="none" /></Svg>
          </TrayIcons>
          <Clock>11:44<br /><span>01-02-2025</span></Clock>
          <svg width="16" height="18"><path d="M8 1q5 0 5 6v4l2 3H1l2-3V7q0-6 5-6zM6 15h4q-.5 2.500-2 2.500T6 15z" fill="#5cc8f5" /></svg>
        </Tray>
      </TaskBar>
    </Shell>
  );
}
